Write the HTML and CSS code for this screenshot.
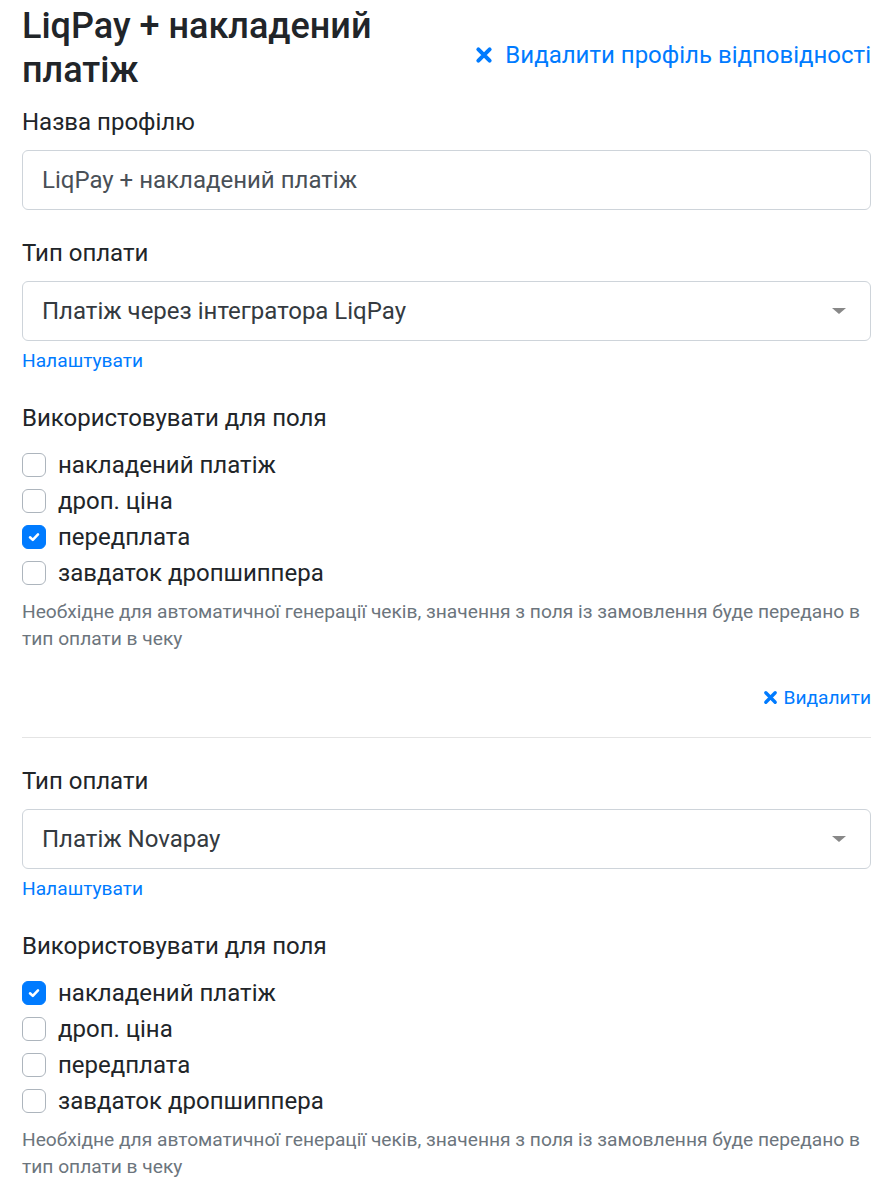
FILE: index.html
```html
<!DOCTYPE html>
<html lang="uk">
<head>
    <meta charset="UTF-8">
    <title>Профіль відповідності</title>
    <link rel="stylesheet" href="styles.css">
</head>
<body>
    <div class="profile">
        <div class="profile-header">
            <h2 class="profile-title">LiqPay + накладений платіж</h2>
            <a class="link link-big" href="#">
                <svg class="icon-x" viewBox="0 0 16 16"><path d="M3 3 L13 13 M13 3 L3 13"/></svg>
                Видалити профіль відповідності
            </a>
        </div>

        <div class="form-group">
            <label class="form-label">Назва профілю</label>
            <input class="form-control" type="text" value="LiqPay + накладений платіж">
        </div>

        <!-- Перший тип оплати -->
        <div class="payment">
            <label class="form-label">Тип оплати</label>
            <div class="select">
                <span>Платіж через інтегратора LiqPay</span>
                <span class="caret"></span>
            </div>
            <a class="link link-small" href="#">Налаштувати</a>

            <div class="fields-title">Використовувати для поля</div>
            <div class="check-list">
                <div class="check"><span class="box"></span>накладений платіж</div>
                <div class="check"><span class="box"></span>дроп. ціна</div>
                <div class="check"><span class="box checked"><svg viewBox="0 0 12 12"><path d="M3 6.2 L5.1 8.2 L9 4"/></svg></span>передплата</div>
                <div class="check"><span class="box"></span>завдаток дропшиппера</div>
            </div>
            <p class="help">Необхідне для автоматичної генерації чеків, значення з поля із замовлення буде передано в тип оплати в чеку</p>

            <div class="remove-row">
                <a class="link link-small" href="#">
                    <svg class="icon-x small" viewBox="0 0 16 16"><path d="M3 3 L13 13 M13 3 L3 13"/></svg>
                    Видалити
                </a>
            </div>
        </div>

        <hr class="divider">

        <!-- Другий тип оплати -->
        <div class="payment">
            <label class="form-label">Тип оплати</label>
            <div class="select">
                <span>Платіж Novapay</span>
                <span class="caret"></span>
            </div>
            <a class="link link-small" href="#">Налаштувати</a>

            <div class="fields-title">Використовувати для поля</div>
            <div class="check-list">
                <div class="check"><span class="box checked"><svg viewBox="0 0 12 12"><path d="M3 6.2 L5.1 8.2 L9 4"/></svg></span>накладений платіж</div>
                <div class="check"><span class="box"></span>дроп. ціна</div>
                <div class="check"><span class="box"></span>передплата</div>
                <div class="check"><span class="box"></span>завдаток дропшиппера</div>
            </div>
            <p class="help">Необхідне для автоматичної генерації чеків, значення з поля із замовлення буде передано в тип оплати в чеку</p>
        </div>
    </div>
</body>
</html>
```

FILE: styles.css
```css
body {
    margin: 0;
    padding: 0 22px;
    font-family: Roboto, 'Liberation Sans', sans-serif;
    color: #212529;
    background: #fff;
}

/* Заголовок профілю */
.profile-header {
    display: flex;
    justify-content: space-between;
    align-items: center;
    padding-top: 4px;
}

.profile-title {
    margin: 0;
    width: 420px;
    font-size: 36px;
    line-height: 44px;
    font-weight: 500;
}

.link {
    color: #007bff;
    text-decoration: none;
}

.link-big {
    font-size: 24px;
    line-height: 36px;
    display: flex;
    align-items: center;
    gap: 12px;
    margin-top: 14px;
}

.link-small {
    font-size: 19.2px;
    line-height: 27px;
    display: inline-flex;
    align-items: center;
    gap: 5px;
}

.icon-x {
    width: 18px;
    height: 18px;
    fill: none;
    stroke: #007bff;
    stroke-width: 3.6;
    stroke-linecap: round;
}

.icon-x.small {
    width: 15px;
    height: 15px;
}

/* Поля форми */
.form-group {
    margin-top: 12px;
}

.form-label {
    display: block;
    font-size: 24px;
    line-height: 36px;
    margin-bottom: 10px;
}

.form-control,
.select {
    box-sizing: border-box;
    display: block;
    width: 100%;
    height: 60px;
    padding: 0 19px;
    font-family: inherit;
    font-size: 24px;
    color: #495057;
    border: 1px solid #ced4da;
    border-radius: 6px;
    background: #fff;
}

.select {
    display: flex;
    align-items: center;
    justify-content: space-between;
    color: #343a40;
    padding-right: 24px;
}

.caret {
    width: 0;
    height: 0;
    border-left: 7px solid transparent;
    border-right: 7px solid transparent;
    border-top: 6px solid #888;
}

.payment {
    margin-top: 25px;
}

.payment .link-small {
    margin-top: 6px;
}

.fields-title {
    font-size: 24px;
    line-height: 36px;
    margin-top: 26px;
}

.check-list {
    margin-top: 11px;
}

.check {
    display: flex;
    align-items: center;
    gap: 12px;
    font-size: 24px;
    line-height: 36px;
}

.box {
    box-sizing: border-box;
    width: 24px;
    height: 24px;
    border: 1px solid #adb5bd;
    border-radius: 6px;
    display: flex;
    align-items: center;
    justify-content: center;
}

.box.checked {
    background: #007bff;
    border-color: #007bff;
}

.box svg {
    width: 16px;
    height: 16px;
    fill: none;
    stroke: #fff;
    stroke-width: 1.9;
    stroke-linecap: round;
    stroke-linejoin: round;
}

.help {
    margin: 7px 0 0;
    font-size: 19.2px;
    line-height: 27px;
    color: #6c757d;
}

.remove-row {
    display: flex;
    justify-content: flex-end;
    margin-top: 32px;
}

.payment .remove-row .link-small {
    margin-top: 0;
}

.divider {
    border: 0;
    border-top: 1px solid #e4e4e4;
    margin: 26px 0 0;
}
```
